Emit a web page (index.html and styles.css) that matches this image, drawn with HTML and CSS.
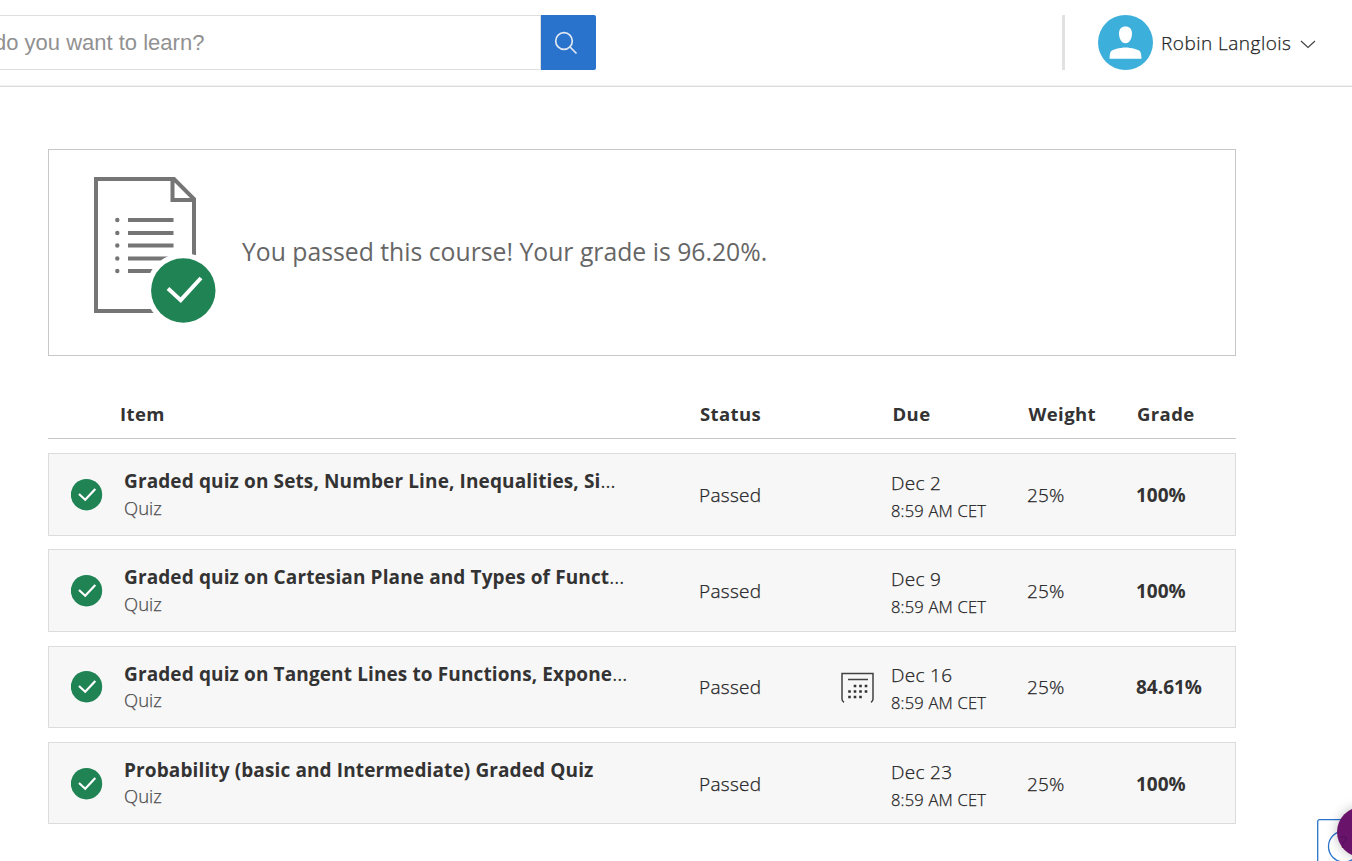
FILE: index.html
```html
<!DOCTYPE html>
<html lang="en">
<head>
<meta charset="utf-8">
<title>Grades</title>
<link rel="stylesheet" href="styles.css">
</head>
<body>
<svg class="sprite" aria-hidden="true">
  <symbol id="passed" viewBox="0 0 32 32"><circle cx="15.500" cy="15.700" r="15.700" fill="#208354"/><path d="M8 15l6.200 5.700L24.300 9.900" fill="none" stroke="#fff" stroke-width="2.200"/></symbol>
</svg>
<header class="topbar">
  <div class="search">
    <div class="search-field"><span class="placeholder">do you want to learn?</span></div>
    <button class="search-button" aria-label="Search">
      <svg width="55" height="55" viewBox="0 0 55 55" fill="none" stroke="#dfe8f2" stroke-width="1.700"><circle cx="23" cy="26" r="8.300"/><path d="M29 32l6.500 6.500"/></svg>
    </button>
  </div>
  <div class="account">
    <svg class="avatar" width="55" height="55" viewBox="0 0 55 55"><circle cx="27.500" cy="27.500" r="27.500" fill="#3dafdb"/><path d="M27.500 11.500c4 0 6.500 2.500 6.500 7 0 5-2.500 9.800-6.500 9.800S21 23.500 21 18.500c0-4.500 2.500-7 6.500-7zM11.500 43.800c.2-3.500.4-6 1.500-7.500 1-1.500 9-3.800 14.500-3.800s13.500 2.300 14.500 3.800c1.100 1.500 1.300 4 1.500 7.500z" fill="#fff"/></svg>
    <span class="user-name">Robin Langlois</span>
    <svg class="chevron" width="16" height="9" viewBox="0 0 16 9" fill="none" stroke="#444" stroke-width="1.200"><path d="M1 1l7 6.500L15 1"/></svg>
  </div>
</header>
<main class="content">
  <section class="banner">
    <svg class="report" width="124" height="148" viewBox="0 0 124 148" fill="none" stroke="#757575" stroke-width="4">
      <path d="M2 3h78l20 20v112H2zM78.500 3v21h22" />
      <path d="M34 44h45.500M34 57h45.500M34 69.500h45.500M34 82.500h45.500M34 95h45.500"/>
      <g fill="#757575" stroke="none"><circle cx="23.300" cy="44" r="2.200"/><circle cx="23.300" cy="57" r="2.200"/><circle cx="23.300" cy="69.500" r="2.200"/><circle cx="23.300" cy="82.500" r="2.200"/><circle cx="23.300" cy="95" r="2.200"/></g>
      <circle cx="89.300" cy="114.500" r="37.500" fill="#fff" stroke="none"/>
      <circle cx="89.300" cy="114.500" r="32.200" fill="#208354" stroke="none"/>
      <path d="M74 112.500l12.700 11.700L107 102" stroke="#fff"/>
    </svg>
    <p class="result">You passed this course! Your grade is 96.20%.</p>
  </section>
  <section class="grades">
    <div class="columns head"><span></span><span>Item</span><span>Status</span><span></span><span>Due</span><span>Weight</span><span>Grade</span></div>
    <div class="columns row tall">
      <svg class="check"><use href="#passed"/></svg>
      <div class="item"><div class="name">Graded quiz on Sets, Number Line, Inequalities, Si<span class="dots">...</span></div><div class="kind">Quiz</div></div>
      <div class="status">Passed</div><div></div>
      <div class="due"><div>Dec 2</div><div class="time">8:59 AM CET</div></div>
      <div class="weight">25%</div><div class="grade">100%</div>
    </div>
    <div class="columns row tall">
      <svg class="check"><use href="#passed"/></svg>
      <div class="item"><div class="name">Graded quiz on Cartesian Plane and Types of Funct<span class="dots">...</span></div><div class="kind">Quiz</div></div>
      <div class="status">Passed</div><div></div>
      <div class="due"><div>Dec 9</div><div class="time">8:59 AM CET</div></div>
      <div class="weight">25%</div><div class="grade">100%</div>
    </div>
    <div class="columns row raised">
      <svg class="check"><use href="#passed"/></svg>
      <div class="item"><div class="name">Graded quiz on Tangent Lines to Functions, Expone<span class="dots">...</span></div><div class="kind">Quiz</div></div>
      <div class="status">Passed</div>
      <svg class="calendar" width="34" height="32" viewBox="0 0 34 32"><path d="M3 30.300C1.300 29.500 1 28.500 1 27V1.500h31V27c0 1.500-.3 2.500-2 3.300M7 7.500h20" fill="none" stroke="#424242" stroke-width="1.500"/><path d="M14 14h0M19.500 14h0M25 14h0M8.500 19.500h0M14 19.500h0M19.500 19.500h0M25 19.500h0M8.500 25h0M14 25h0M19.500 25h0" stroke="#333" stroke-width="2.600" stroke-linecap="square"/></svg>
      <div class="due"><div>Dec 16</div><div class="time">8:59 AM CET</div></div>
      <div class="weight">25%</div><div class="grade">84.61%</div>
    </div>
    <div class="columns row">
      <svg class="check"><use href="#passed"/></svg>
      <div class="item"><div class="name">Probability (basic and Intermediate) Graded Quiz</div><div class="kind">Quiz</div></div>
      <div class="status">Passed</div><div></div>
      <div class="due"><div>Dec 23</div><div class="time">8:59 AM CET</div></div>
      <div class="weight">25%</div><div class="grade">100%</div>
    </div>
  </section>
</main>
<aside class="help">
  <svg width="35" height="42" viewBox="0 0 35 42"><rect x=".7" y=".7" width="50" height="50" rx="2" fill="#fff" stroke="#2a73cc" stroke-width="1.300"/><circle cx="27" cy="27.500" r="15.500" fill="none" stroke="#2a73cc" stroke-width="1.300"/></svg>
  <div class="chat"><span>?</span></div>
</aside>
</body>
</html>
```
FILE: styles.css
```css
* { box-sizing: border-box; }
body { margin: 0; width: 1352px; height: 861px; overflow: hidden; position: relative; background: #fff; color: #333; font-family: "Open Sans", "Noto Sans", sans-serif; font-size: 19px; }
.sprite { display: none; }
.topbar { display: flex; justify-content: space-between; height: 87px; padding-top: 15px; border-bottom: 1px solid #dcdcdc; box-shadow: inset 0 -1px #f0f0f0; }
.search { display: flex; height: 55px; }
.search-field { width: 541px; border: 1px solid #dedede; border-left: 0; font: 22px/53px "Liberation Sans", Arial, sans-serif; color: #919191; white-space: nowrap; }
.placeholder { margin-left: -6px; }
.search-button { width: 55px; height: 55px; padding: 0; border: 0; background: #2a73cc; border-radius: 0 2px 2px 0; }
.search-button svg { display: block; }
.account { display: flex; align-items: center; width: 290px; height: 55px; padding-left: 33px; border-left: 3px solid #e1e1e1; }
.user-name { width: 138px; padding-left: 8px; color: #222; font-weight: 300; letter-spacing: .48px; white-space: nowrap; -webkit-text-stroke: .25px currentColor; }
.chevron { margin: 4px 0 0 9px; }
.content { padding: 62px 0 0 48px; width: 1236px; }
.banner { display: flex; height: 207px; border: 1px solid #c7c7c7; padding: 26px 0 0 45px; }
.result { margin: 58px 0 0 24px; font-size: 24.75px; line-height: 36px; color: #666; }
.columns { display: grid; grid-template-columns: 76px 575px 142px 50px 136px 109px 1fr; width: 1188px; white-space: nowrap; }
.head { height: 83px; padding-top: 45px; border-bottom: 1px solid #c7c7c7; margin-bottom: 14px; font-weight: 700; font-size: 18.500px; line-height: 26px; letter-spacing: .4px; }
.head > :nth-child(2) { margin-left: -4px; }
.head > :nth-child(n+3) { margin-left: 1px; }
.head > :nth-child(5), .head > :nth-child(6) { margin-left: 1.500px; }
.row { height: 82px; margin-bottom: 14px; background: #f7f7f7; border: 1px solid #dcdcdc; line-height: 28px; grid-template-columns: 75px 575px 142px 50px 136px 109px 1fr; font-weight: 300; color: #222; }
.tall { height: 83px; margin-bottom: 13px; }
.tall + .raised { margin-top: 14px; }
.check { width: 32px; height: 32px; margin: 24.500px 0 0 22px; }
.raised .check { margin-top: 24px; }
.name { font-weight: 700; font-size: 19px; margin-top: 13px; letter-spacing: .12px; color: #333; }
.dots { font-weight: 400; letter-spacing: 0; }
.kind { font-size: 18.500px; margin-top: -1px; color: #4a4a4a; }
.kind, .status, .due, .weight { -webkit-text-stroke: .25px currentColor; }
.row:not(.tall) .kind { margin-top: -2px; }
.status, .weight, .grade { padding-top: 27px; }
.status, .due { letter-spacing: .3px; }
.weight { letter-spacing: .1px; }
.grade { font-weight: 700; color: #333; }
.due { padding-top: 15px; }
.time { font-size: 16.500px; letter-spacing: .2px; }
.raised .status, .raised .weight, .raised .grade { padding-top: 26px; }
.raised .due { padding-top: 14px; }
.calendar { margin-top: 25px; }
.help { position: absolute; left: 1317px; top: 819px; width: 35px; height: 42px; }
.help > svg { display: block; }
.chat { position: absolute; left: 20px; top: -12px; width: 50px; height: 50px; border-radius: 50%; background: #6a136b; box-shadow: 0 0 12px rgba(0,0,0,.25); color: #54105e; }
.chat span { position: absolute; left: 3px; top: 23px; font-size: 16px; line-height: 24px; }
```
